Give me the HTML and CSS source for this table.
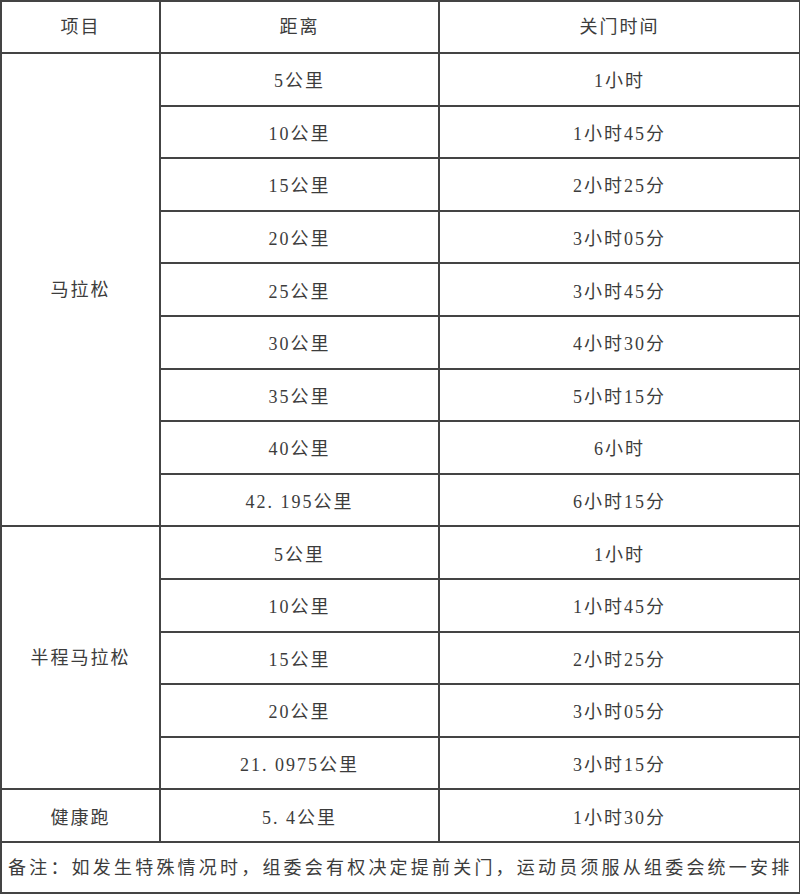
FILE: index.html
```html
<!DOCTYPE html>
<html lang="zh">
<head>
<meta charset="utf-8">
<link rel="stylesheet" href="styles.css">
</head>
<body>
<table class="sheet">
  <colgroup>
    <col class="c1"><col class="c2"><col class="c3">
  </colgroup>
  <tr class="head"><td>项目</td><td>距离</td><td>关门时间</td></tr>
  <tr><td rowspan="9">马拉松</td><td>5公里</td><td>1小时</td></tr>
  <tr><td>10公里</td><td>1小时45分</td></tr>
  <tr><td>15公里</td><td>2小时25分</td></tr>
  <tr><td>20公里</td><td>3小时05分</td></tr>
  <tr><td>25公里</td><td>3小时45分</td></tr>
  <tr><td>30公里</td><td>4小时30分</td></tr>
  <tr><td>35公里</td><td>5小时15分</td></tr>
  <tr><td>40公里</td><td>6小时</td></tr>
  <tr><td>42. 195公里</td><td>6小时15分</td></tr>
  <tr><td rowspan="5">半程马拉松</td><td>5公里</td><td>1小时</td></tr>
  <tr><td>10公里</td><td>1小时45分</td></tr>
  <tr><td>15公里</td><td>2小时25分</td></tr>
  <tr><td>20公里</td><td>3小时05分</td></tr>
  <tr><td>21. 0975公里</td><td>3小时15分</td></tr>
  <tr><td>健康跑</td><td>5. 4公里</td><td>1小时30分</td></tr>
  <tr class="note"><td colspan="3">备注：如发生特殊情况时，组委会有权决定提前关门，运动员须服从组委会统一安排</td></tr>
</table>
</body>
</html>
```

FILE: styles.css
```css
html, body {
  margin: 0;
  padding: 0;
  background: #ffffff;
}

.sheet {
  border-collapse: collapse;
  width: 799px;
  table-layout: fixed;
  font-family: "Liberation Serif", "Noto Sans CJK SC", serif;
  font-size: 18px;
  color: #3c3c3c;
}

.c1 { width: 159px; }
.c2 { width: 279px; }
.c3 { width: 361px; }

.sheet tr {
  height: 52.6px;
}

.sheet td {
  border: 2px solid #444;
  padding: 4px 0 0 0;
  text-align: center;
  vertical-align: middle;
  letter-spacing: 2px;
  line-height: 20px;
}

.sheet td[rowspan] {
  padding-top: 0;
}

.sheet tr.head {
  height: 52px;
}

.sheet tr.head td {
  padding-top: 0;
}

.sheet tr.note {
  height: 51px;
}

.sheet tr.note td {
  text-align: left;
  padding: 2px 0 0 6px;
  letter-spacing: 3.2px;
}
```
